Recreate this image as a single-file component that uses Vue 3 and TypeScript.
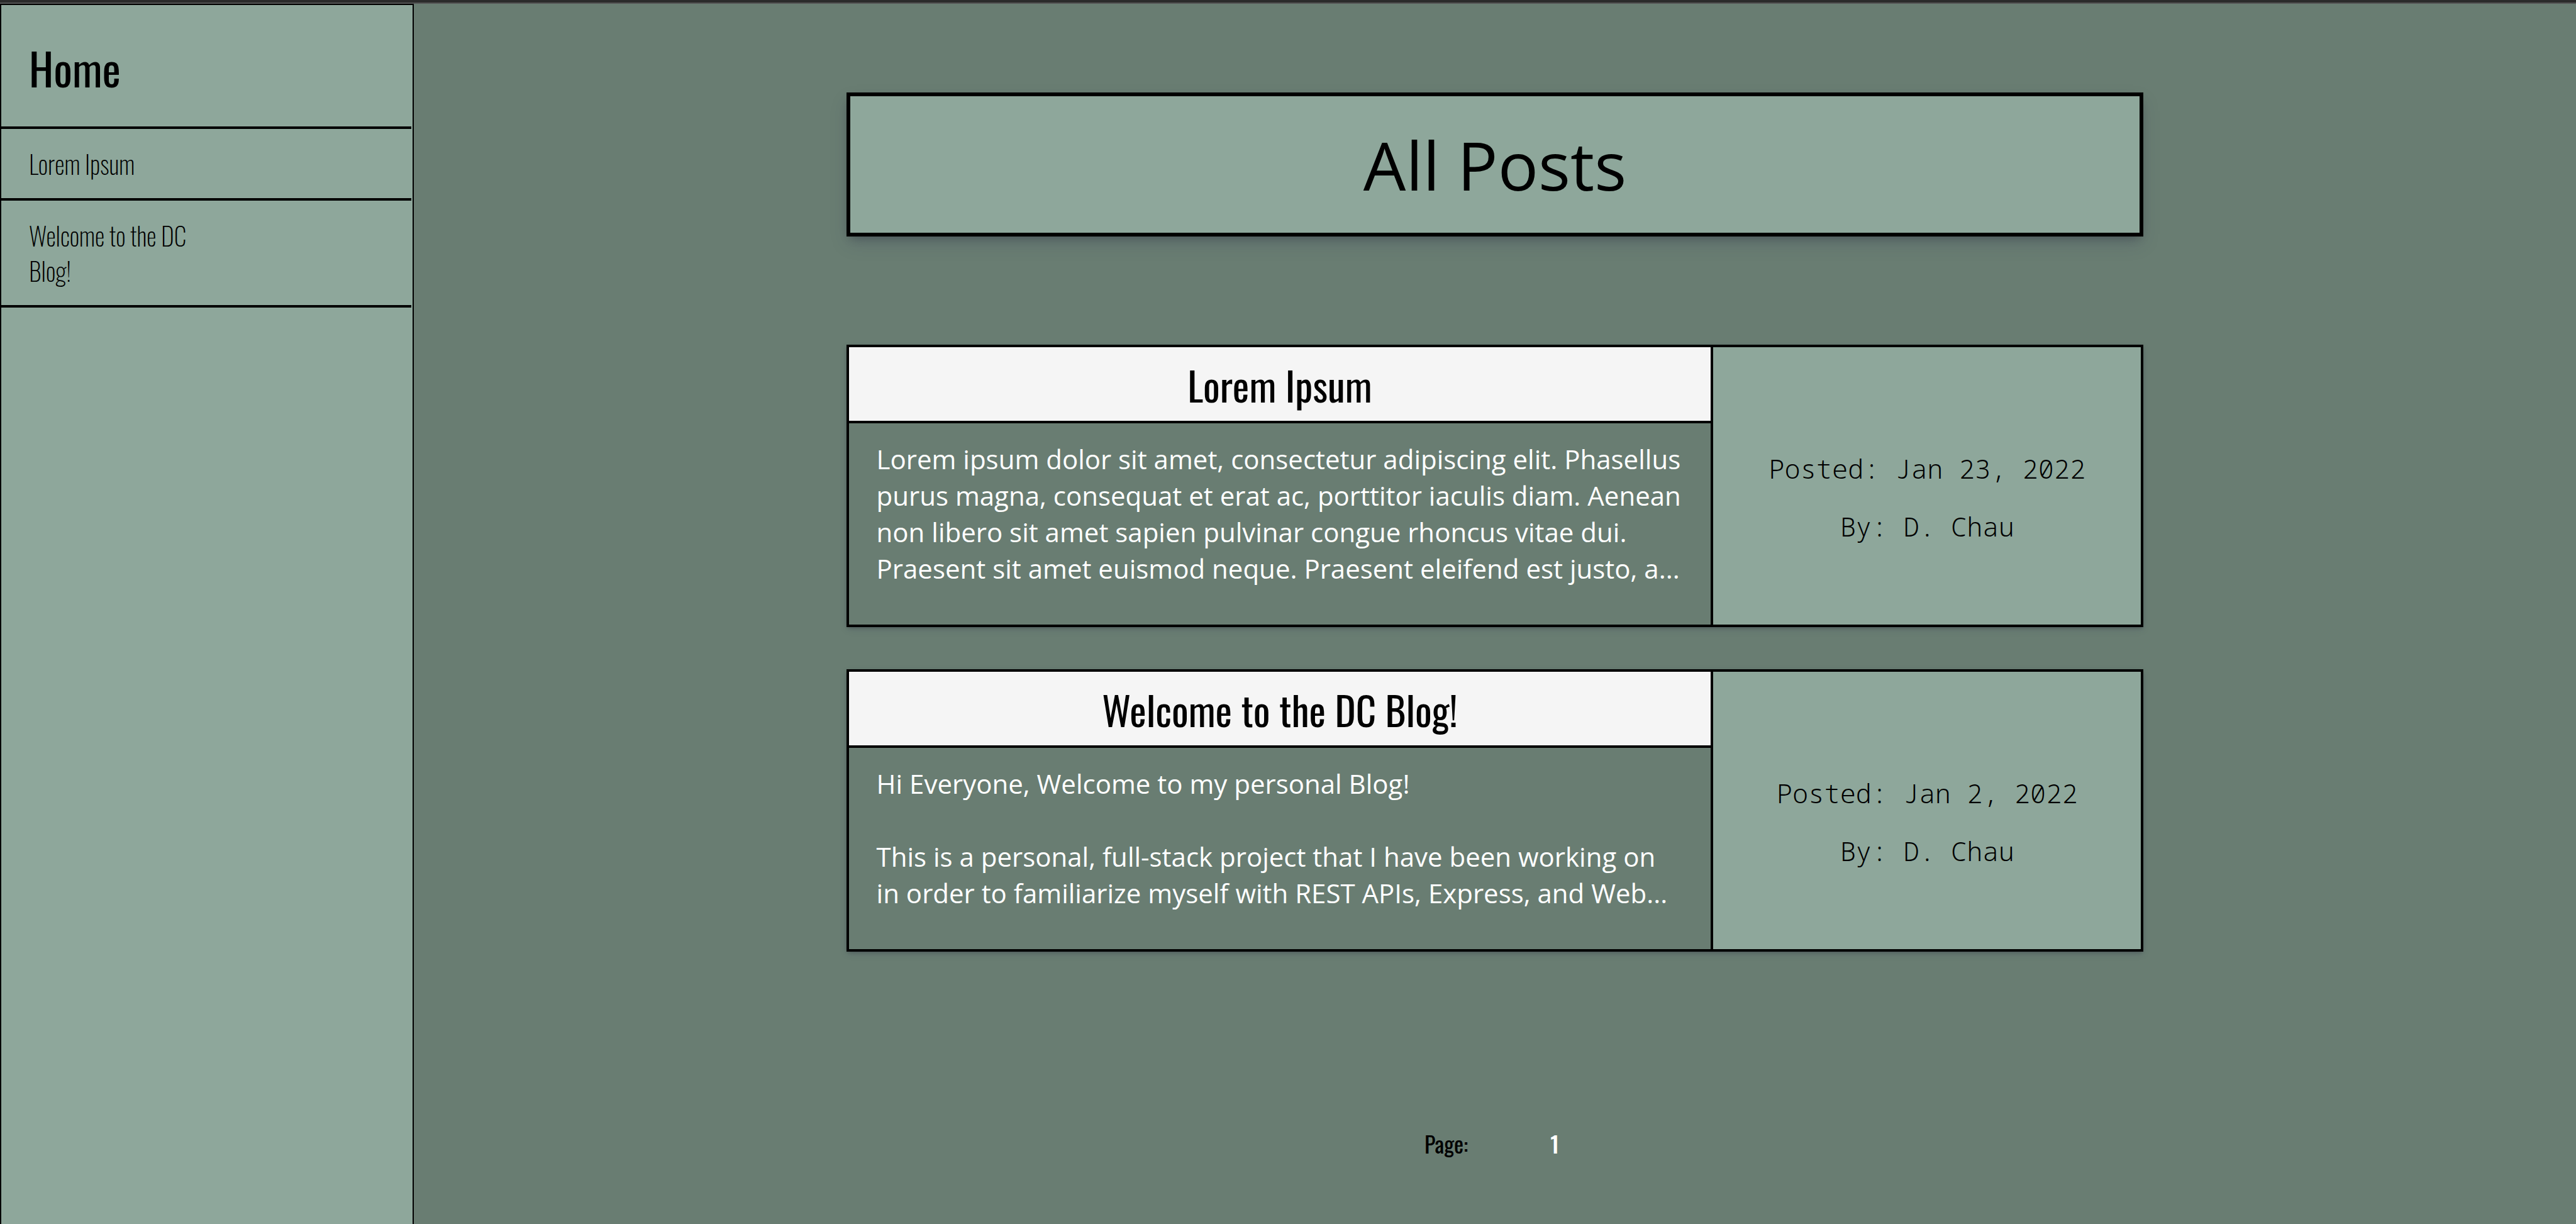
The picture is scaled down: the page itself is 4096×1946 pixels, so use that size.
<script setup lang="ts">
interface Post {
  id: number
  title: string
  excerpt: string
  posted: string
  author: string
}

const posts: Post[] = [
  {
    id: 2,
    title: 'Lorem Ipsum',
    excerpt:
      'Lorem ipsum dolor sit amet, consectetur adipiscing elit. Phasellus purus magna, consequat et erat ac, porttitor iaculis diam. Aenean non libero sit amet sapien pulvinar congue rhoncus vitae dui. Praesent sit amet euismod neque. Praesent eleifend est justo, a...',
    posted: 'Jan 23, 2022',
    author: 'D. Chau',
  },
  {
    id: 1,
    title: 'Welcome to the DC Blog!',
    excerpt:
      'Hi Everyone, Welcome to my personal Blog!\n\nThis is a personal, full-stack project that I have been working on in order to familiarize myself with REST APIs, Express, and Web...',
    posted: 'Jan 2, 2022',
    author: 'D. Chau',
  },
]

const pages: number[] = [1]
</script>

<template>
  <div class="app">
    <div class="topbar"></div>
    <div class="layout">
      <nav class="sidebar" aria-label="Posts">
        <a class="home" href="#home">Home</a>
        <a v-for="post in posts" :key="post.id" class="item" :href="`#post-${post.id}`">
          <span class="item-text">{{ post.title }}</span>
        </a>
      </nav>

      <main class="main">
        <header class="hero">
          <h1>All Posts</h1>
        </header>

        <section class="posts">
          <article v-for="post in posts" :id="`post-${post.id}`" :key="post.id" class="card">
            <div class="content">
              <h2>
                <a :href="`#post-${post.id}`">{{ post.title }}</a>
              </h2>
              <p class="excerpt">{{ post.excerpt }}</p>
            </div>
            <aside class="meta">
              <p>Posted: {{ post.posted }}</p>
              <p>By: {{ post.author }}</p>
            </aside>
          </article>
        </section>

        <nav class="pager" aria-label="Pages">
          <span>Page:</span>
          <a v-for="page in pages" :key="page" class="page" :href="`#page-${page}`">{{ page }}</a>
        </nav>
      </main>
    </div>
  </div>
</template>

<style>
body {
  margin: 0;
  background: #697d72;
}
</style>

<style scoped>
.app {
  display: flex;
  flex-direction: column;
  min-height: 100vh;
  color: #000;
  font-family: "Open Sans", "Noto Sans", sans-serif;
}

h1,
h2,
p {
  margin: 0;
  font-weight: 400;
}

a {
  color: inherit;
  text-decoration: none;
}

.topbar {
  height: 4px;
  background: #2b2b2b;
  border-bottom: 2px solid #555;
}

.layout {
  display: flex;
  flex: 1;
}

.sidebar {
  display: flex;
  flex-direction: column;
  flex: none;
  box-sizing: border-box;
  width: 658px;
  padding-right: 2px;
  border: 2px solid #000;
  border-bottom: 0;
  background: #8ea79b;
  font-family: Oswald, "Roboto Condensed", sans-serif;
}

.home {
  padding: 48px 44px 43px;
  border-bottom: 4px solid #000;
  font-size: 70px;
  line-height: 102px;
}

.item {
  padding: 27px 44px;
  border-bottom: 4px solid #000;
  font-size: 40px;
  font-weight: 200;
  line-height: 56px;
}

.item-text {
  display: block;
  width: 50%;
}

.main {
  display: flex;
  flex: 1;
  flex-direction: column;
  align-items: center;
  padding-top: 141px;
}

.hero {
  box-sizing: border-box;
  width: 60%;
  padding: 38px 0;
  border: 6px solid #000;
  background: #8ea79b;
  box-shadow:
    0 13px 26px -4px rgba(50, 50, 93, 0.25),
    0 6px 15px -6px rgba(0, 0, 0, 0.3);
}

h1 {
  font-size: 107px;
  line-height: 141px;
  text-align: center;
}

.posts {
  display: flex;
  flex-direction: column;
  gap: 67px;
  width: 60%;
  margin-top: 172px;
}

.card {
  display: flex;
  border: 4px solid #000;
  box-shadow:
    0 4px 11px -2px rgba(50, 50, 93, 0.25),
    0 2px 6px -2px rgba(0, 0, 0, 0.3);
}

.content {
  flex: 1;
  min-width: 0;
}

h2 {
  padding: 14px 0 12px;
  border-bottom: 4px solid #000;
  background: #f5f5f5;
  font-family: Oswald, "Roboto Condensed", sans-serif;
  font-size: 63px;
  line-height: 91px;
  text-align: center;
}

.excerpt {
  padding: 28px 44px 60px;
  color: #fff;
  font-size: 42px;
  line-height: 58px;
  white-space: pre-line;
}

.meta {
  display: flex;
  flex-direction: column;
  align-items: center;
  justify-content: center;
  gap: 35px;
  box-sizing: border-box;
  width: 33.3%;
  padding-top: 36px;
  border-left: 4px solid #000;
  background: #8ea79b;
  font-family: "Noto Sans Mono", "Liberation Mono", monospace;
  font-size: 42px;
  line-height: 57px;
}

.meta p {
  font-weight: 300;
}

.pager {
  display: flex;
  gap: 121px;
  margin-top: 278px;
  font-family: Oswald, "Roboto Condensed", sans-serif;
  font-size: 36px;
  line-height: 53px;
}

.page {
  padding: 0 10px;
  color: #fff;
  font-weight: 500;
}
</style>
